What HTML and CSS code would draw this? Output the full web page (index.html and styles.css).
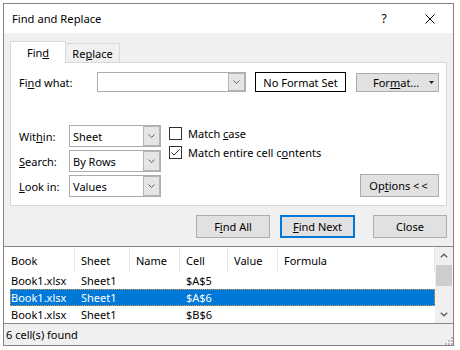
FILE: index.html
```html
<!DOCTYPE html>
<html lang="en">
<head>
  <meta charset="UTF-8">
  <title>Find and Replace</title>
  <link rel="stylesheet" href="styles.css">
</head>
<body>

  <div class="window">
    <div class="titlebar">
      <span class="title">Find and Replace</span>
      <span class="tb-btn help">?</span>
      <span class="tb-btn close">
        <svg width="10" height="10" viewBox="0 0 10 10"><path d="M0.5 0.5L9.5 9.5M9.5 0.5L0.5 9.5" stroke="#000" stroke-width="1" fill="none"/></svg>
      </span>
    </div>

    <div class="client">
      <div class="tabs">
        <div class="tab active"><span>Fin<u>d</u></span></div>
        <div class="tab inactive"><span>Re<u>p</u>lace</span></div>
      </div>

      <div class="panel">
        <div class="find-row">
          <span class="label-find">Fi<u>n</u>d what:</span>
          <div class="combo combo-find">
            <span class="combo-text"></span>
            <span class="drop"><svg width="7" height="4" viewBox="0 0 7 4"><path d="M0.5 0.5L3.5 3.5L6.5 0.5" stroke="#606060" fill="none"/></svg></span>
          </div>
          <div class="no-format">No Format Set</div>
          <div class="btn btn-format">
            <span>For<u>m</u>at...</span>
            <svg class="tri" width="5" height="3" viewBox="0 0 5 3"><path d="M0 0H5L2.5 3Z" fill="#222"/></svg>
          </div>
        </div>

        <div class="opts">
          <div class="selects">
            <div class="sel-row">
              <span class="label-sel">Wit<u>h</u>in:</span>
              <div class="combo combo-sel">
                <span class="combo-text">Sheet</span>
                <span class="drop"><svg width="7" height="4" viewBox="0 0 7 4"><path d="M0.5 0.5L3.5 3.5L6.5 0.5" stroke="#606060" fill="none"/></svg></span>
              </div>
            </div>
            <div class="sel-row">
              <span class="label-sel"><u>S</u>earch:</span>
              <div class="combo combo-sel">
                <span class="combo-text">By Rows</span>
                <span class="drop"><svg width="7" height="4" viewBox="0 0 7 4"><path d="M0.5 0.5L3.5 3.5L6.5 0.5" stroke="#606060" fill="none"/></svg></span>
              </div>
            </div>
            <div class="sel-row">
              <span class="label-sel"><u>L</u>ook in:</span>
              <div class="combo combo-sel">
                <span class="combo-text">Values</span>
                <span class="drop"><svg width="7" height="4" viewBox="0 0 7 4"><path d="M0.5 0.5L3.5 3.5L6.5 0.5" stroke="#606060" fill="none"/></svg></span>
              </div>
            </div>
          </div>

          <div class="checks">
            <div class="check">
              <span class="box"></span>
              <span>Match <u>c</u>ase</span>
            </div>
            <div class="check">
              <span class="box"><svg width="11" height="11" viewBox="0 0 11 11"><path d="M1.5 5.5L4 8L9.5 2.5" stroke="#333" fill="none"/></svg></span>
              <span>Match entire cell c<u>o</u>ntents</span>
            </div>
          </div>

          <div class="btn btn-options"><span>Op<u>t</u>ions <span class="lt">&lt;&lt;</span></span></div>
        </div>
      </div>

      <div class="actions">
        <div class="btn btn-findall"><span>F<u>i</u>nd All</span></div>
        <div class="btn btn-findnext"><span><u>F</u>ind Next</span></div>
        <div class="btn btn-close">Close</div>
      </div>

      <div class="results">
        <div class="list">
          <div class="list-head">
            <span class="hcell">Book</span>
            <span class="hcell">Sheet</span>
            <span class="hcell">Name</span>
            <span class="hcell">Cell</span>
            <span class="hcell">Value</span>
            <span class="hcell">Formula</span>
          </div>
          <div class="row">
            <span class="cell first">Book1.xlsx</span><span class="cell">Sheet1</span><span class="cell"></span><span class="cell">$A$5</span><span class="cell"></span><span class="cell"></span>
          </div>
          <div class="row selected">
            <span class="cell first">Book1.xlsx</span><span class="cell">Sheet1</span><span class="cell"></span><span class="cell">$A$6</span><span class="cell"></span><span class="cell"></span>
          </div>
          <div class="row">
            <span class="cell first">Book1.xlsx</span><span class="cell">Sheet1</span><span class="cell"></span><span class="cell">$B$6</span><span class="cell"></span><span class="cell"></span>
          </div>
        </div>
        <div class="scrollbar">
          <span class="sb-arrow"><svg width="8" height="5" viewBox="0 0 8 5"><path d="M0.8 4.3L4 1.2L7.2 4.3" stroke="#606060" stroke-width="1.4" fill="none"/></svg></span>
          <span class="sb-thumb"></span>
          <span class="sb-arrow down"><svg width="8" height="5" viewBox="0 0 8 5"><path d="M0.8 0.7L4 3.8L7.2 0.7" stroke="#606060" stroke-width="1.4" fill="none"/></svg></span>
        </div>
      </div>

      <div class="status">
        <span class="status-text">6 cell(s) found</span>
        <svg class="grip" width="9" height="9" viewBox="0 0 9 9">
          <rect x="7" y="1" width="2" height="2" fill="#bcbcbc"/>
          <rect x="4" y="4" width="2" height="2" fill="#bcbcbc"/>
          <rect x="7" y="4" width="2" height="2" fill="#bcbcbc"/>
          <rect x="1" y="7" width="2" height="2" fill="#bcbcbc"/>
          <rect x="4" y="7" width="2" height="2" fill="#bcbcbc"/>
          <rect x="7" y="7" width="2" height="2" fill="#bcbcbc"/>
        </svg>
      </div>
    </div>
  </div>

</body>
</html>
```

FILE: styles.css
```css
body {
  margin: 0;
  padding: 3px;
  background: #fff;
  font-family: "Segoe UI", "Noto Sans", sans-serif;
  font-size: 11px;
  color: #000;
}

.window {
  width: 451px;
  height: 343px;
  box-sizing: border-box;
  border: 1px solid #838383;
  background: #f0f0f0;
  display: flex;
  flex-direction: column;
}

/* title bar */
.titlebar {
  height: 29px;
  flex-shrink: 0;
  background: #fff;
  display: flex;
  align-items: center;
}

.title {
  flex: 1;
  padding-left: 8px;
  font-size: 11.2px;
}

.tb-btn {
  width: 46px;
  height: 29px;
  display: flex;
  align-items: center;
  justify-content: center;
}

.help {
  font-size: 12px;
}

.client {
  flex: 1;
  display: flex;
  flex-direction: column;
}

/* tabs */
.tabs {
  display: flex;
  align-items: flex-end;
  padding: 8px 0 0 6px;
  position: relative;
  z-index: 1;
}

.tab {
  margin-bottom: -1px;
  box-sizing: border-box;
  border: 1px solid #d9d9d9;
  display: flex;
  align-items: center;
  justify-content: center;
}

.tab.active {
  width: 56px;
  height: 22px;
  background: #fff;
  border-bottom: none;
}

.tab.inactive {
  width: 54px;
  height: 20px;
  border-left: none;
  background: #f0f0f0;
}

.panel {
  margin: 0 6px;
  border: 1px solid #d9d9d9;
  background: #fff;
  padding: 9px 7px 8px 8px;
  display: flex;
  flex-direction: column;
}

.find-row {
  display: flex;
  align-items: center;
  height: 20px;
}

.label-find {
  width: 78px;
}

.combo {
  box-sizing: border-box;
  border: 1px solid #adadad;
  background: #fff;
  display: flex;
  align-items: center;
}

.combo-text {
  flex: 1;
  padding-left: 3px;
}

.drop {
  width: 17px;
  align-self: stretch;
  box-sizing: border-box;
  border: 1px solid #b4b4b4;
  background: #e5e5e5;
  display: flex;
  align-items: center;
  justify-content: center;
}

.combo-find {
  width: 149px;
  height: 20px;
}

.no-format {
  width: 91px;
  height: 20px;
  box-sizing: border-box;
  margin-left: 9px;
  border: 1px solid #000;
  display: flex;
  align-items: center;
  justify-content: center;
}

.btn {
  box-sizing: border-box;
  border: 1px solid #adadad;
  background: #e1e1e1;
  display: flex;
  align-items: center;
  justify-content: center;
}

.btn-format {
  width: 83px;
  height: 19px;
  margin-left: 10px;
  justify-content: flex-start;
  padding-left: 16px;
}

.btn-format .tri {
  margin-left: auto;
  margin-right: 4px;
}

.opts {
  display: flex;
  align-items: flex-end;
  margin-top: 33px;
}

.selects {
  display: flex;
  flex-direction: column;
  gap: 3px;
}

.sel-row {
  display: flex;
  align-items: center;
  height: 22px;
}

.label-sel {
  width: 50px;
}

.combo-sel {
  width: 92px;
  height: 22px;
}

.checks {
  align-self: flex-start;
  margin: -1px 0 0 8px;
  display: flex;
  flex-direction: column;
}

.check {
  height: 19px;
  display: flex;
  align-items: center;
}

.box {
  width: 13px;
  height: 13px;
  box-sizing: border-box;
  border: 1px solid #333;
  margin-right: 6px;
  display: flex;
  align-items: center;
  justify-content: center;
}

.btn-options {
  margin-left: auto;
  width: 79px;
  height: 23px;
}

.lt {
  letter-spacing: 2px;
}

/* bottom buttons */
.actions {
  display: flex;
  justify-content: flex-end;
  margin-top: 9px;
  padding-right: 6px;
}

.actions .btn {
  height: 23px;
}

.btn-findall {
  width: 74px;
}

.btn-findnext {
  width: 75px;
  margin-left: 10px;
  border: 2px solid #0078d7;
}

.btn-close {
  width: 74px;
  margin-left: 18px;
}

/* results list */
.results {
  margin-top: 8px;
  height: 78px;
  box-sizing: border-box;
  border-top: 1px solid #828790;
  border-bottom: 1px solid #828790;
  background: #fff;
  display: flex;
}

.list {
  width: 430px;
  padding-left: 1px;
}

.list-head {
  display: grid;
  grid-template-columns: 70px 55px 50px 48px 50px 157px;
  height: 25px;
}

.hcell {
  height: 24px;
  margin-top: 1px;
  box-sizing: border-box;
  border-right: 1px solid #e5e5e5;
  padding-left: 6px;
  display: flex;
  align-items: center;
}

.row {
  display: grid;
  grid-template-columns: 65px 55px 50px 48px 50px 157px;
  height: 17px;
  margin-left: 5px;
  align-items: center;
}

.cell {
  padding-left: 6px;
  white-space: nowrap;
}

.cell.first {
  padding-left: 1px;
}

.row.selected {
  background: #0078d7;
  color: #fff;
  outline: 1px dotted #e8973a;
  outline-offset: -1px;
}

.scrollbar {
  flex: 1;
  background: #f0f0f0;
  display: flex;
  flex-direction: column;
}

.sb-arrow {
  height: 17px;
  display: flex;
  align-items: center;
  justify-content: center;
}

.sb-arrow.down {
  margin-top: auto;
}

.sb-thumb {
  height: 21px;
  margin: 1px 1px 0;
  background: #cdcdcd;
}

/* status bar */
.status {
  flex: 1;
  display: flex;
  align-items: center;
  padding-left: 2px;
}

.grip {
  margin-left: auto;
  align-self: flex-end;
}
```
